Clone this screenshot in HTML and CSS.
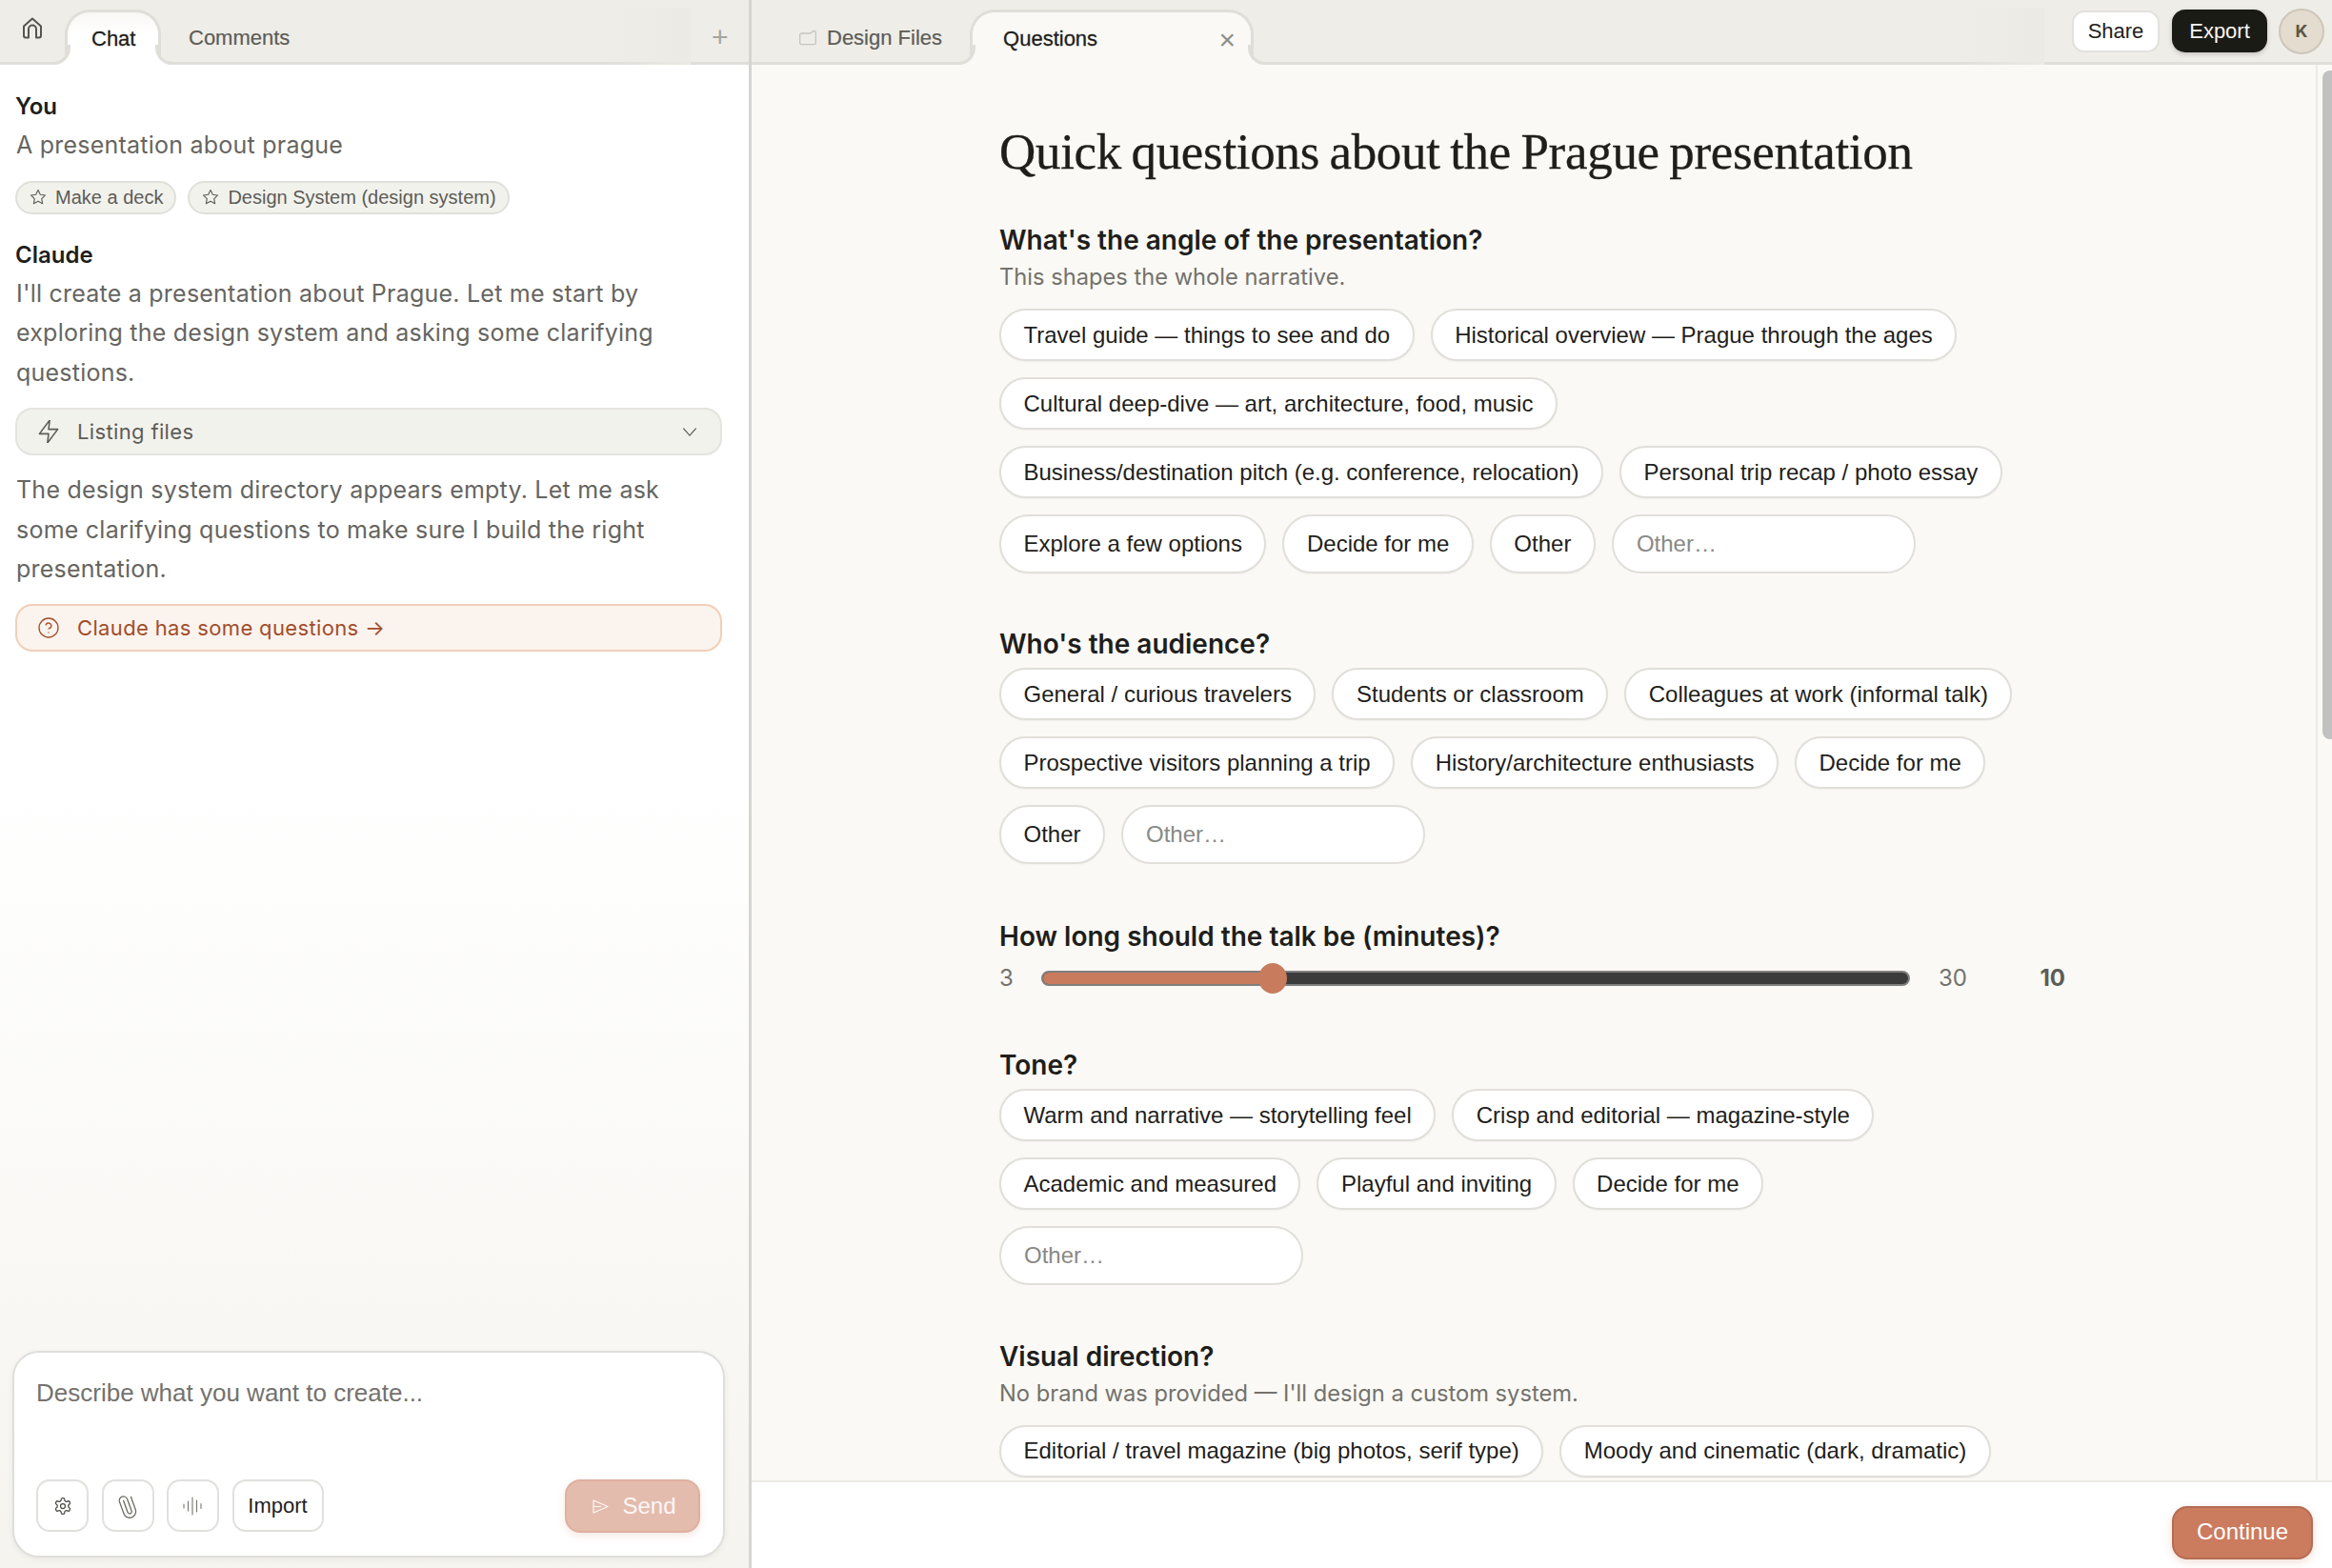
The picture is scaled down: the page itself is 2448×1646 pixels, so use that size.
FILE: index.html
```html
<!DOCTYPE html>
<html lang="en">
<head>
	<meta charset="UTF-8">
	<meta name="viewport" content="width=device-width, initial-scale=1.0">
	<title>Quick questions</title>
	<link rel="stylesheet" href="styles.css">
</head>
<body>
	<div class="app">
		<aside class="side">
			<header class="bar">
				<svg class="homeIcon" viewBox="0 0 24 24"><path d="M3 10 12 2l9 8v10a2 2 0 0 1-2 2h-3V13a4 4 0 0 0-8 0v9H5a2 2 0 0 1-2-2z"/></svg>
				<div class="tab tabChat">Chat</div>
				<div class="tabPlain">Comments</div>
				<div class="fade"></div>
				<div class="plus">+</div>
			</header>

			<div class="log">
				<h4 class="who">You</h4>
				<p class="msg">A presentation about prague</p>
				<div class="tags">
					<span class="tag"><svg class="ico" viewBox="0 0 24 24"><polygon points="12 2 15.09 8.26 22 9.27 17 14.14 18.18 21.02 12 17.77 5.82 21.02 7 14.14 2 9.27 8.91 8.26"/></svg>Make a deck</span>
					<span class="tag"><svg class="ico" viewBox="0 0 24 24"><polygon points="12 2 15.09 8.26 22 9.27 17 14.14 18.18 21.02 12 17.77 5.82 21.02 7 14.14 2 9.27 8.91 8.26"/></svg>Design System (design system)</span>
				</div>
				<h4 class="who whoClaude">Claude</h4>
				<p class="msg">I'll create a presentation about Prague. Let me start by exploring the design system and asking some clarifying questions.</p>
				<div class="note noteTool">
					<svg class="noteIco" viewBox="4 2 16 20"><polygon points="13 2 4 14 12 14 11 22 20 10 12 10"/></svg>
					<span>Listing files</span>
					<svg class="chev" viewBox="0 0 24 24"><path d="m4 8 8 9 8-9"/></svg>
				</div>
				<p class="msg msgAfter">The design system directory appears empty. Let me ask some clarifying questions to make sure I build the right presentation.</p>
				<div class="note noteAsk">
					<svg class="noteIco" viewBox="1 1 22 22"><circle cx="12" cy="12" r="10"/><path d="M9.09 9a3 3 0 0 1 5.83 1c0 2-3 3-3 3"/><path d="M12 17h.01"/></svg>
					<span>Claude has some questions →</span>
				</div>
			</div>

			<div class="composer">
				<textarea class="prompt" placeholder="Describe what you want to create..."></textarea>
				<div class="tools">
					<button class="toolBtn"><svg class="toolIco" viewBox="0 0 24 24"><path d="M12.22 2h-.44a2 2 0 0 0-2 2v.18a2 2 0 0 1-1 1.73l-.43.25a2 2 0 0 1-2 0l-.15-.08a2 2 0 0 0-2.73.73l-.22.38a2 2 0 0 0 .73 2.73l.15.1a2 2 0 0 1 1 1.72v.51a2 2 0 0 1-1 1.74l-.15.09a2 2 0 0 0-.73 2.73l.22.38a2 2 0 0 0 2.73.73l.15-.08a2 2 0 0 1 2 0l.43.25a2 2 0 0 1 1 1.73V20a2 2 0 0 0 2 2h.44a2 2 0 0 0 2-2v-.18a2 2 0 0 1 1-1.73l.43-.25a2 2 0 0 1 2 0l.15.08a2 2 0 0 0 2.73-.73l.22-.39a2 2 0 0 0-.73-2.73l-.15-.08a2 2 0 0 1-1-1.74v-.5a2 2 0 0 1 1-1.74l.15-.09a2 2 0 0 0 .73-2.73l-.22-.38a2 2 0 0 0-2.73-.73l-.15.08a2 2 0 0 1-2 0l-.43-.25a2 2 0 0 1-1-1.73V4a2 2 0 0 0-2-2z"/><circle cx="12" cy="12" r="3"/></svg></button>
					<button class="toolBtn"><svg class="toolIco clip" viewBox="0 0 24 24"><path transform="rotate(-65 12 12)" d="m21.44 11.05-9.19 9.19a6 6 0 0 1-8.49-8.49l8.57-8.57A4 4 0 1 1 18 8.84l-8.59 8.57a2 2 0 0 1-2.83-2.83l8.49-8.48"/></svg></button>
					<button class="toolBtn"><svg class="toolIco wave" viewBox="0 0 24 24"><path d="M2 10v4M6.500 7v10M11 3v18M15.500 6v12M20 9.500v5"/></svg></button>
					<button class="toolBtn importBtn">Import</button>
					<button class="sendBtn"><svg class="sendIco" viewBox="0 0 17 15"><path d="M1 1 16 7.500 1 14zM1 7.500h8"/></svg>Send</button>
				</div>
			</div>
		</aside>

		<section class="main">
			<header class="bar barMain">
				<div class="tabPlain tabFiles">
					<svg class="folder" viewBox="0 0 24 20"><path d="M2 6a2 2 0 0 1 2-2h11l4-3h1a2 2 0 0 1 2 2v13a2 2 0 0 1-2 2H4a2 2 0 0 1-2-2z"/></svg>
					Design Files
				</div>
				<div class="tab tabQuestions">Questions<span class="close">×</span></div>
				<div class="fade fadeMain"></div>
				<div class="actions">
					<button class="share">Share</button>
					<button class="export">Export</button>
					<div class="avatar">K</div>
				</div>
			</header>

			<div class="scrollArea">
				<div class="page">
					<div class="form">
						<h1 class="title">Quick questions about the Prague presentation</h1>

						<div class="block blockAngle">
							<h3 class="ask">What's the angle of the presentation?</h3>
							<p class="hint">This shapes the whole narrative.</p>
							<div class="opts">
								<button class="opt">Travel guide — things to see and do</button>
								<button class="opt">Historical overview — Prague through the ages</button>
								<button class="opt">Cultural deep-dive — art, architecture, food, music</button>
								<button class="opt">Business/destination pitch (e.g. conference, relocation)</button>
								<button class="opt">Personal trip recap / photo essay</button>
								<button class="opt">Explore a few options</button>
								<button class="opt">Decide for me</button>
								<button class="opt">Other</button>
								<input class="optInput" placeholder="Other…">
							</div>
						</div>

						<div class="block blockAudience">
							<h3 class="ask askTight">Who's the audience?</h3>
							<div class="opts">
								<button class="opt">General / curious travelers</button>
								<button class="opt">Students or classroom</button>
								<button class="opt">Colleagues at work (informal talk)</button>
								<button class="opt">Prospective visitors planning a trip</button>
								<button class="opt">History/architecture enthusiasts</button>
								<button class="opt">Decide for me</button>
								<button class="opt">Other</button>
								<input class="optInput" placeholder="Other…">
							</div>
						</div>

						<div class="block blockLength">
							<h3 class="ask askTight">How long should the talk be (minutes)?</h3>
							<div class="range">
								<span class="rangeMin">3</span>
								<div class="track"><div class="fill" style="width: 26.500%"></div></div>
								<span class="rangeMax">30</span>
								<span class="rangeVal">10</span>
							</div>
						</div>

						<div class="block">
							<h3 class="ask askTight">Tone?</h3>
							<div class="opts">
								<button class="opt">Warm and narrative — storytelling feel</button>
								<button class="opt">Crisp and editorial — magazine-style</button>
								<button class="opt">Academic and measured</button>
								<button class="opt">Playful and inviting</button>
								<button class="opt">Decide for me</button>
								<input class="optInput" placeholder="Other…">
							</div>
						</div>

						<div class="block">
							<h3 class="ask">Visual direction?</h3>
							<p class="hint">No brand was provided — I'll design a custom system.</p>
							<div class="opts">
								<button class="opt">Editorial / travel magazine (big photos, serif type)</button>
								<button class="opt">Moody and cinematic (dark, dramatic)</button>
							</div>
						</div>
					</div>
				</div>
				<div class="gutter"><div class="thumb"></div></div>
			</div>

			<footer class="foot">
				<button class="continue">Continue</button>
			</footer>
		</section>
	</div>
</body>
</html>
```

FILE: styles.css
```css
* {
	box-sizing: border-box;
}
html, body {
	margin: 0;
	height: 100%;
	overflow: hidden;
}
body {
	font-family: "Liberation Sans", Arial, sans-serif;
	color: #1f1e1b;
}
button, input, textarea {
	font-family: inherit;
}
.app {
	display: flex;
	height: 100vh;
}

/* top bars */
.bar {
	display: flex;
	align-items: center;
	flex: none;
	height: 68px;
	background: #eeede8;
	border-bottom: 3px solid #dfded9;
	font-size: 22px;
}
.homeIcon {
	flex: none;
	width: 24px;
	height: 27px;
	margin: -7px 0 0 22px;
	fill: none;
	stroke: #55544f;
	stroke-width: 2;
	stroke-linejoin: round;
}
.tab {
	position: relative;
	align-self: flex-end;
	height: 58px;
	margin-bottom: -3px;
	border: 3px solid #dfded9;
	border-bottom: 0;
	border-radius: 26px 26px 0 0;
	color: #1f1e1b;
	-webkit-text-stroke: 0.3px #1f1e1b;
}
.tab::before, .tab::after {
	content: "";
	position: absolute;
	bottom: 0;
	width: 18px;
	height: 18px;
	border-bottom: 3px solid #dfded9;
}
.tab::before {
	left: -18px;
	border-right: 3px solid #dfded9;
	border-bottom-right-radius: 18px;
}
.tab::after {
	right: -18px;
	border-left: 3px solid #dfded9;
	border-bottom-left-radius: 18px;
}
.tabChat {
	width: 101px;
	margin-left: 22px;
	padding: 15px 0 0 25px;
	background: linear-gradient(#f8f7f4, #fff 40%);
}
.tabChat::before {
	box-shadow: 6px 6px 0 3px #fff;
	clip-path: inset(0 0 0 0);
}
.tabChat::after {
	box-shadow: -6px 6px 0 3px #fff;
	clip-path: inset(0 0 0 0);
}
.tabPlain {
	color: #5d5c57;
	-webkit-text-stroke: 0.2px #5d5c57;
	margin: 14px 0 0 29px;
}
.fade {
	align-self: stretch;
	width: 90px;
	margin: 8px 0 -3px auto;
	background: linear-gradient(90deg, rgba(235, 234, 228, 0), #ebeae4);
}
.plus {
	width: 61px;
	padding-left: 22px;
	color: #a5a49f;
	font-size: 30px;
	margin-top: 12px;
}

/* left column */
.side {
	display: flex;
	flex-direction: column;
	flex: none;
	width: 789px;
	border-right: 3px solid #d6d5d1;
	background: linear-gradient(#fff 50%, #f5f4ef);
}
.log {
	flex: 1;
	padding: 28px 28px 0 16px;
	font-family: Inter, sans-serif;
}
.who {
	margin: 0;
	font-size: 24px;
	font-weight: 600;
	line-height: 32px;
	color: #1f1e1b;
}
.whoClaude {
	margin-top: 27px;
}
.msg {
	margin: 4px 0 0 1px;
	font-size: 25px;
	line-height: 41.500px;
	letter-spacing: 0.23px;
	color: #666560;
}
.msgAfter {
	margin-top: 16px;
}
.tags {
	display: flex;
	gap: 12px;
	margin-top: 16px;
}
.tag {
	display: flex;
	align-items: center;
	gap: 9px;
	height: 35px;
	padding: 0 12px 0 13px;
	border: 2px solid #e0dfda;
	border-radius: 18px;
	background: #f2f2ed;
	font-family: "Liberation Sans", sans-serif;
	font-size: 20px;
	color: #5d5c57;
}
.ico {
	width: 18px;
	height: 18px;
	fill: none;
	stroke: #5d5c57;
	stroke-width: 1.500;
	stroke-linejoin: round;
}
.note {
	display: flex;
	align-items: center;
	gap: 19px;
	height: 50px;
	margin-top: 16px;
	padding: 0 22px;
	border-radius: 18px;
	font-size: 22px;
	letter-spacing: 0.35px;
}
.noteTool {
	border: 2px solid #e4e3de;
	background: #f2f2ed;
	color: #5d5c57;
}
.noteAsk {
	margin-top: 15px;
	border: 2px solid #f0cfb9;
	background: #fbf3ee;
	color: #a04e2b;
}
.noteIco {
	flex: none;
	width: 22px;
	height: 24px;
	fill: none;
	stroke: currentColor;
	stroke-width: 1.300;
	stroke-linecap: round;
	stroke-linejoin: round;
}
.chev {
	width: 20px;
	height: 20px;
	margin-left: auto;
	fill: none;
	stroke: #5d5c57;
	stroke-width: 1.500;
}

/* composer */
.composer {
	display: flex;
	flex-direction: column;
	flex: none;
	height: 217px;
	margin: 0 25px 11px 13px;
	padding: 26px 24px 24px 23px;
	border: 2px solid #dededb;
	border-radius: 28px;
	background: #fff;
	box-shadow: 0 2px 6px rgba(0, 0, 0, 0.06);
}
.prompt {
	flex: 1;
	padding: 0;
	border: 0;
	outline: 0;
	resize: none;
	font-size: 26px;
	line-height: 32px;
	background: none;
}
.prompt::placeholder {
	color: #73726d;
	opacity: 1;
}
.tools {
	display: flex;
	gap: 13.500px;
}
.toolBtn {
	display: flex;
	align-items: center;
	justify-content: center;
	width: 55px;
	height: 55px;
	padding: 0;
	border: 2px solid #e0e0dd;
	border-radius: 14px;
	background: #fff;
	font-size: 22px;
	color: #1f1e1b;
}
.importBtn {
	width: 96px;
}
.toolIco {
	width: 20px;
	height: 20px;
	fill: none;
	stroke: #4a4945;
	stroke-width: 1.500;
	stroke-linecap: round;
	stroke-linejoin: round;
}
.clip {
	width: 26px;
	height: 30px;
	stroke: #6c6b66;
	stroke-width: 1.200;
}
.wave {
	width: 24px;
	height: 24px;
	stroke: #777671;
	stroke-width: 1.100;
}
.sendBtn {
	display: flex;
	align-items: center;
	justify-content: center;
	gap: 14px;
	width: 142px;
	height: 56px;
	margin-left: auto;
	padding: 0 0 0 4px;
	border: 2px solid #deb0a0;
	border-radius: 16px;
	background: #e4bcae;
	box-shadow: 0 3px 8px rgba(204, 122, 93, 0.18);
	color: #fdf7f4;
	font-size: 24px;
}
.sendIco {
	width: 17px;
	height: 15px;
	fill: none;
	stroke: #fdf7f4;
	stroke-width: 1.200;
	stroke-linejoin: round;
}

/* right column */
.main {
	display: flex;
	flex-direction: column;
	flex: 1;
	min-width: 0;
}
.barMain .tabFiles {
	display: flex;
	align-items: center;
	gap: 10px;
	margin-left: 49px;
}
.folder {
	width: 20px;
	height: 18px;
	fill: #eeede8;
	stroke: #c6c5c0;
	stroke-width: 1.600;
	stroke-linejoin: round;
}
.tabQuestions {
	display: flex;
	width: 298px;
	margin-left: 29px;
	padding: 15px 0 0 32px;
	background: #faf9f5;
}
.tabQuestions::before {
	box-shadow: 6px 6px 0 3px #faf9f5;
	clip-path: inset(0 0 0 0);
}
.tabQuestions::after {
	box-shadow: -6px 6px 0 3px #faf9f5;
	clip-path: inset(0 0 0 0);
}
.close {
	margin: -3px 0 0 auto;
	padding-right: 16px;
	color: #8f8e89;
	font-size: 30px;
	-webkit-text-stroke: 0;
}
.fadeMain {
	margin-left: auto;
}
.actions {
	display: flex;
	align-items: center;
	gap: 13px;
	margin: 0 8px 0 29px;
}
.share {
	width: 92px;
	height: 44px;
	padding: 0;
	border: 2px solid #e2e1dd;
	border-radius: 13px;
	background: #fff;
	font-size: 22px;
	color: #1f1e1b;
}
.export {
	width: 100px;
	height: 45px;
	padding: 0;
	border: 0;
	border-radius: 14px;
	background: #1b1b16;
	box-shadow: 0 2px 5px rgba(0, 0, 0, 0.18);
	font-size: 22px;
	color: #f7f6f2;
}
.avatar {
	display: flex;
	align-items: center;
	justify-content: center;
	width: 48px;
	height: 48px;
	margin-left: -1px;
	border: 2px solid #cdc6ba;
	border-radius: 50%;
	background: #e4dccf;
	font-family: Inter, sans-serif;
	font-size: 18px;
	font-weight: 700;
	color: #5b5548;
}
.scrollArea {
	display: flex;
	flex: 1;
	min-height: 0;
	background: #faf9f5;
}
.page {
	flex: 1;
	overflow: hidden;
	padding-right: 2px;
}
.form {
	width: 1120px;
	margin: 0 auto;
	padding-top: 61px;
}
.title {
	margin: 0 0 45px;
	font-family: "Liberation Serif", serif;
	font-size: 53px;
	font-weight: 400;
	line-height: 60px;
	letter-spacing: -0.3px;
	word-spacing: -2.500px;
	-webkit-text-stroke: 0.3px #1f1e1b;
	color: #1f1e1b;
}
.block {
	margin-bottom: 56.500px;
}
.blockAngle {
	margin-bottom: 56px;
}
.blockAudience {
	margin-bottom: 57.500px;
}
.blockLength {
	margin-bottom: 54.500px;
}
.ask {
	margin: 0 0 5px;
	font-family: Inter, sans-serif;
	font-size: 28px;
	font-weight: 600;
	line-height: 36px;
	color: #1f1e1b;
}
.askTight {
	margin-bottom: 7px;
}
.hint {
	margin: 0 0 17px;
	font-family: Inter, sans-serif;
	font-size: 23.700px;
	line-height: 32px;
	color: #73726d;
}
.opts {
	display: flex;
	flex-wrap: wrap;
	gap: 17px;
}
.opt {
	flex: none;
	min-height: 55px;
	padding: 0 23.500px;
	border: 2px solid #e0dfda;
	border-radius: 31px;
	background: #fff;
	box-shadow: 0 1px 2px rgba(0, 0, 0, 0.04);
	font-size: 24px;
	color: #1f1e1b;
}
.optInput {
	width: 319px;
	height: 62px;
	padding: 0 24px;
	border: 2px solid #e0dfda;
	border-radius: 31px;
	background: #fff;
	outline: 0;
	font-size: 24px;
}
.optInput::placeholder {
	color: #8a8985;
	opacity: 1;
}

/* slider */
.range {
	display: flex;
	align-items: center;
	height: 38px;
	font-family: Inter, sans-serif;
	font-size: 24px;
	color: #73726d;
}
.rangeMin {
	width: 44px;
}
.track {
	position: relative;
	width: 912px;
	height: 16px;
	border: 2px solid #7f7f7f;
	border-radius: 8px;
	background: #3b3b3b;
}
.fill {
	position: relative;
	height: 100%;
	border-radius: 6px 0 0 6px;
	background: #c97b5d;
}
.fill::after {
	content: "";
	position: absolute;
	top: -10px;
	right: -15px;
	width: 30px;
	height: 32px;
	border-radius: 50%;
	background: #c97b5d;
}
.rangeMax {
	margin-left: 30px;
}
.rangeVal {
	margin-left: auto;
	padding-right: 1px;
	font-weight: 700;
	color: #5d5c57;
}

/* scrollbar + footer */
.gutter {
	flex: none;
	width: 17px;
	padding: 6px 0 0 5px;
	border-left: 2px solid #ebeae7;
}
.thumb {
	height: 702px;
	border-radius: 8px 0 0 8px;
	background: #c1c1c1;
}
.foot {
	display: flex;
	justify-content: flex-end;
	align-items: flex-start;
	flex: none;
	height: 92px;
	padding: 25px 20px 0 0;
	border-top: 2px solid #ebeae7;
	background: #fff;
}
.continue {
	width: 148px;
	height: 56px;
	padding: 0 0 2px;
	border: 2px solid #b56c52;
	border-radius: 16px;
	background: #cb7b5e;
	box-shadow: 0 3px 8px rgba(204, 122, 93, 0.25);
	color: #fff;
	font-size: 24px;
}
```
